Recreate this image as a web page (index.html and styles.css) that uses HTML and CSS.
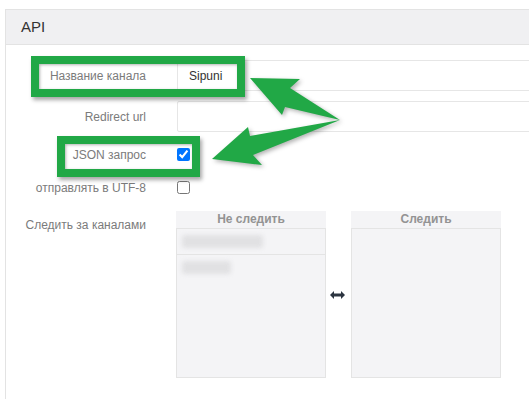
FILE: index.html
```html
<!DOCTYPE html>
<html lang="ru">
<head>
    <meta charset="UTF-8">
    <meta name="viewport" content="width=device-width, initial-scale=1.0">
    <title>API</title>
    <link rel="stylesheet" href="styles.css">
</head>
<body>
<div class="page">
    <div class="panel">
        <div class="panel-heading">API</div>
        <div class="panel-body">
            <div class="form-row row-input">
                <label class="form-label">Название канала</label>
                <input class="form-input" type="text" value="Sipuni">
            </div>
            <div class="form-row row-input">
                <label class="form-label">Redirect url</label>
                <input class="form-input" type="text">
            </div>
            <div class="form-row row-check">
                <label class="form-label">JSON запрос</label>
                <input class="form-check" type="checkbox" checked>
            </div>
            <div class="form-row row-check row-utf">
                <label class="form-label">отправлять в UTF-8</label>
                <input class="form-check" type="checkbox">
            </div>
            <div class="form-row row-lists">
                <label class="form-label">Следить за каналами</label>
                <div class="dual-list">
                    <div class="list-box">
                        <div class="list-title">Не следить</div>
                        <div class="list-body">
                            <div class="list-item"><span class="blurred" style="width:81px"></span></div>
                            <div class="list-item"><span class="blurred" style="width:49px"></span></div>
                        </div>
                    </div>
                    <svg class="swap-icon" width="15" height="8" viewBox="0 0 15 8">
                        <polygon points="0,4 4,0 4,2.6 11,2.6 11,0 15,4 11,8 11,5.4 4,5.4 4,8" fill="#2b3440"/>
                    </svg>
                    <div class="list-box">
                        <div class="list-title">Следить</div>
                        <div class="list-body"></div>
                    </div>
                </div>
            </div>
        </div>
    </div>

    <!-- annotation marks drawn over the form -->
    <div class="mark mark-name"></div>
    <div class="mark mark-json"></div>
    <svg class="pointers" width="529" height="399" viewBox="0 0 529 399">
        <polygon points="250,78 300,79 290,88 340,120 285,107 282,115" />
        <polygon points="212,159 248,127 250,136 340,120 253,155 262,165" />
    </svg>
</div>
</body>
</html>
```

FILE: styles.css
```css
body {
    margin: 0;
    font-family: "Liberation Sans", Arial, sans-serif;
    font-size: 12px;
    color: #333;
    background-color: #fff;
    overflow: hidden;
}
.page {
    position: relative;
    width: 529px;
    height: 399px;
    overflow: hidden;
}
.panel {
    margin: 9px 0 0 5px;
    width: 600px;
    height: 420px;
    border: 1px solid #e3e3e3;
    box-sizing: border-box;
}
.panel-heading {
    height: 34px;
    line-height: 34px;
    padding-left: 15px;
    font-size: 15px;
    color: #333;
    background-color: #f0f0f2;
    border-bottom: 1px solid #e3e3e3;
}
.panel-body {
    padding-top: 15px;
}
.form-row {
    display: grid;
    grid-template-columns: 140px 1fr;
    column-gap: 31px;
    align-items: center;
}
.form-label {
    text-align: right;
    color: #7b7b7b;
    font-size: 12px;
}
.row-input {
    height: 31px;
    margin-bottom: 10px;
}
.form-input {
    height: 31px;
    box-sizing: border-box;
    border: 1px solid #e6e6e6;
    border-radius: 2px;
    padding: 0 11px;
    font-family: "Liberation Sans", Arial, sans-serif;
    font-size: 12px;
    color: #333;
    outline: none;
}
.row-check {
    height: 25px;
    margin-bottom: 8px;
}
.row-check:first-of-type {
    margin-top: -1px;
}
.row-utf {
    margin-bottom: 11px;
}
.form-check {
    width: 13px;
    height: 13px;
    margin: 0;
}
.row-lists {
    align-items: start;
}
.row-lists .form-label {
    padding-top: 7px;
}
.dual-list {
    display: flex;
    align-items: center;
    margin-left: -1px;
}
.list-box {
    width: 150px;
}
.list-title {
    height: 17px;
    line-height: 17px;
    text-align: center;
    font-weight: bold;
    color: #939393;
    background-color: #f4f4f6;
}
.list-body {
    height: 150px;
    box-sizing: border-box;
    border: 1px solid #e4e4e4;
    background-color: #f4f4f6;
}
.list-item {
    height: 26px;
    padding: 6px 0 0 5px;
    box-sizing: border-box;
    border-bottom: 1px solid #e4e4e4;
}
.list-item:last-child {
    border-bottom: none;
}
.blurred {
    display: block;
    height: 13px;
    background-color: #e1e1e3;
    border-radius: 3px;
    filter: blur(2px);
}
.swap-icon {
    margin: 0 6px 0 4px;
}
.mark {
    position: absolute;
    box-sizing: border-box;
    border: 8px solid #21a846;
    box-shadow: 2px 3px 4px rgba(0, 0, 0, 0.35), inset 1px 1px 3px rgba(0, 0, 0, 0.3);
}
.mark-name {
    left: 31px;
    top: 56px;
    width: 214px;
    height: 41px;
}
.mark-json {
    left: 57px;
    top: 136px;
    width: 143px;
    height: 41px;
}
.pointers {
    position: absolute;
    left: 0;
    top: 0;
    fill: #21a846;
    filter: drop-shadow(2px 2px 2px rgba(0, 0, 0, 0.3));
}
```
